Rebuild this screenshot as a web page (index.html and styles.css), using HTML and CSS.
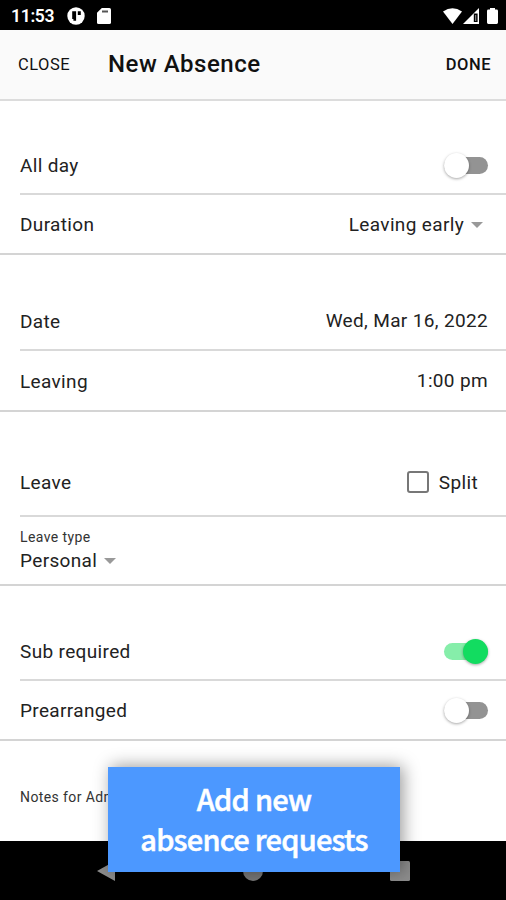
FILE: index.html
```html
<!DOCTYPE html>
<html lang="en">
<head>
  <meta charset="UTF-8">
  <title>New Absence</title>
  <link rel="stylesheet" href="styles.css">
</head>
<body>
  <div class="status-bar">
    <span class="clock">11:53</span>
    <svg class="app-icon" width="18" height="18" viewBox="0 0 18 18">
      <circle cx="9" cy="9" r="8.7" fill="#fff"/>
      <path d="M5.2 4.2h3.9v9.6H6.4V12H5.2zM10.8 4.2h3v3.9h-3z" fill="#000"/>
    </svg>
    <svg class="sd-icon" width="14" height="16" viewBox="0 0 14 16">
      <path d="M4.8 0H12.4Q14 0 14 1.6V14.4Q14 16 12.4 16H1.6Q0 16 0 14.4V4.8z" fill="#fff"/>
      <path d="M5 2.5h6v2H5z" fill="#555"/>
    </svg>
    <div class="signals">
      <svg width="19" height="16" viewBox="0 0 19 16">
        <path d="M0 3.6Q9.5-3.2 19 3.6L9.5 16z" fill="#fff"/>
      </svg>
      <svg class="cell-icon" width="16" height="16" viewBox="0 0 16 16">
        <path d="M16 0V16H0z" fill="#fff"/>
        <path d="M10.8 5.5h3.8v8.5h-3.8z" fill="#000"/>
        <path d="M12.2 7h1v6h-1z" fill="#999"/>
      </svg>
      <svg class="battery-icon" width="11" height="16" viewBox="0 0 11 16">
        <path d="M3 0h5v1.6h1.6Q11 1.6 11 3V14.6Q11 16 9.6 16H1.4Q0 16 0 14.6V3Q0 1.6 1.4 1.6H3z" fill="#fff"/>
      </svg>
    </div>
  </div>

  <header class="toolbar">
    <button class="bar-btn close">CLOSE</button>
    <h1>New Absence</h1>
    <button class="bar-btn done">DONE</button>
  </header>

  <main>
    <section class="group">
      <div class="row">
        <span>All day</span>
        <span class="toggle"></span>
      </div>
      <div class="row">
        <span>Duration</span>
        <span class="value select">Leaving early<i class="caret"></i></span>
      </div>
    </section>

    <section class="group">
      <div class="row">
        <span>Date</span>
        <span class="value raised">Wed, Mar 16, 2022</span>
      </div>
      <div class="row lower">
        <span>Leaving</span>
        <span class="value raised">1:00 pm</span>
      </div>
    </section>

    <section class="group">
      <div class="row tall">
        <span>Leave</span>
        <label class="split"><i class="checkbox"></i>Split</label>
      </div>
      <div class="row stacked">
        <span class="small">Leave type</span>
        <span class="personal">Personal<i class="caret"></i></span>
      </div>
    </section>

    <section class="group last">
      <div class="row">
        <span>Sub required</span>
        <span class="toggle on"></span>
      </div>
      <div class="row">
        <span>Prearranged</span>
        <span class="toggle"></span>
      </div>
    </section>

    <div class="notes small">Notes for Administrator</div>
  </main>

  <nav class="nav-bar">
    <svg width="18" height="20" viewBox="0 0 18 20"><path d="M18 0V20L0 10z" fill="#8c8c8c"/></svg>
    <svg width="20" height="20" viewBox="0 0 20 20"><circle cx="10" cy="10" r="10" fill="#777"/></svg>
    <svg width="20" height="20" viewBox="0 0 20 20"><rect width="20" height="20" rx="1.5" fill="#8c8c8c"/></svg>
  </nav>

  <div class="callout">Add new<br>absence requests</div>
</body>
</html>
```

FILE: styles.css
```css
* { box-sizing: border-box; }
body {
  margin: 0;
  width: 506px;
  height: 900px;
  position: relative;
  display: flex;
  flex-direction: column;
  overflow: hidden;
  background: #fff;
  color: #222;
  font-family: Roboto, sans-serif;
  font-size: 19px;
  letter-spacing: 0.35px;
}
svg { display: block; flex: none; }

.status-bar {
  height: 30px;
  padding: 1px 8px 0 11px;
  display: flex;
  align-items: center;
  background: #000;
  color: #fff;
}
.clock { width: 56px; padding-top: 1px; font-size: 17.5px; font-weight: 600; letter-spacing: -0.3px; }
.sd-icon { margin-left: 12px; }
.signals { margin-left: auto; display: flex; }
.cell-icon { margin-left: 1px; }
.battery-icon { margin-left: 8px; }

.toolbar {
  height: 71px;
  padding: 0 15px 0 18px;
  display: flex;
  align-items: center;
  background: #fafafa;
  border-bottom: 2px solid #dcdcdc;
}
.toolbar h1 { margin: 0; padding-bottom: 1px; font-size: 24px; font-weight: 500; letter-spacing: 0.5px; color: #111; }
.bar-btn { padding: 0; border: none; background: none; color: #111; font: 400 16.5px Roboto, sans-serif; letter-spacing: 0.5px; }
.close { width: 90px; text-align: left; }
.done { margin-left: auto; font-weight: 500; }

main { height: 740px; flex: none; }
.group {
  padding: 36px 0 0 20px;
  border-bottom: 2px solid #d4d4d4;
  height: 154px;
}
.group + .group { height: 157px; padding-top: 38px; }
.group:nth-of-type(3) { height: 174px; padding-top: 36px; }
.group.last { height: 155px; padding-top: 37px; }
.row {
  height: 58px;
  padding-right: 18px;
  display: flex;
  align-items: center;
  justify-content: space-between;
}
.row:first-child { border-bottom: 2px solid #d9d9d9; }
.row.lower { padding-top: 2px; }
.row.tall { height: 69px; padding-top: 1px; }
.row.stacked { height: 67px; flex-direction: column; align-items: flex-start; justify-content: center; gap: 4px; }
.small { font-size: 14px; letter-spacing: 0.4px; color: #333; }
.row .small { margin-top: -1px; }
.raised { margin-top: -2px; }
.select { padding-right: 5px; }
.caret {
  display: inline-block;
  margin-left: 7px;
  border: 6px solid transparent;
  border-top-color: #999;
  border-bottom: none;
  vertical-align: 3px;
}
.split { padding-right: 10px; display: flex; align-items: center; }
.checkbox { width: 22px; height: 22px; margin-right: 10px; border: 2px solid #777; border-radius: 3px; }

.toggle {
  position: relative;
  width: 44px;
  height: 17px;
  border-radius: 9px;
  background: #939393;
}
.toggle::after {
  content: "";
  position: absolute;
  left: 0;
  top: -4px;
  width: 25px;
  height: 25px;
  border-radius: 50%;
  background: #fff;
  box-shadow: 0 1px 3px rgba(0,0,0,0.35);
}
.toggle.on { background: #86eeaa; }
.toggle.on::after { left: auto; right: 0; background: #12dc60; }

.notes { padding: 48px 0 0 20px; }

.nav-bar {
  flex: 1;
  padding: 20px 96px 0 97px;
  display: flex;
  justify-content: space-between;
  background: #000;
}

/* promo caption over the bottom of the screen */
.callout {
  position: absolute;
  left: 108px;
  top: 767px;
  width: 292px;
  height: 105px;
  padding-top: 11px;
  background: #4c98ff;
  color: #fff;
  font: 500 29px/40px "Noto Sans CJK SC", sans-serif;
  letter-spacing: -0.75px;
  -webkit-text-stroke: 0.5px #fff;
  text-align: center;
  box-shadow: 3px -1px 16px rgba(0,0,0,0.4);
}
```
